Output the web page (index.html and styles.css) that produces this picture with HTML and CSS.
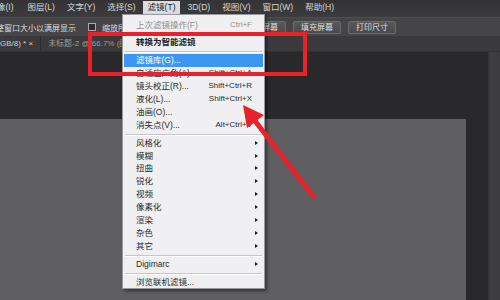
FILE: index.html
```html
<!DOCTYPE html>
<html lang="zh-CN">
<head>
    <meta charset="UTF-8">
    <title>滤镜菜单</title>
    <link rel="stylesheet" href="styles.css">
</head>
<body>
    <div class="screen">
        <div class="menubar">
            <span class="mb-item cut">像(I)</span>
            <span class="mb-item">图层(L)</span>
            <span class="mb-item">文字(Y)</span>
            <span class="mb-item">选择(S)</span>
            <span class="mb-item active">滤镜(T)</span>
            <span class="mb-item">3D(D)</span>
            <span class="mb-item">视图(V)</span>
            <span class="mb-item">窗口(W)</span>
            <span class="mb-item">帮助(H)</span>
        </div>
        <div class="optbar">
            <span class="opt-text">整窗口大小以满屏显示</span>
            <span class="check"></span>
            <span class="opt-text">缩放所有窗口</span>
            <span class="btn first">适合屏幕</span>
            <span class="btn">填充屏幕</span>
            <span class="btn">打印尺寸</span>
        </div>
        <div class="tabbar">
            <span class="tab active">GB/8) * ×</span>
            <span class="tab">未标题-2 @ 66.7% (图层 1, RGB/8)</span>
        </div>
        <div class="work">
            <div class="doc-area">
                <div class="doc"></div>
            </div>
            <div class="panel"></div>
        </div>

        <ul class="menu">
            <li class="item disabled">上次滤镜操作(F)<span class="key">Ctrl+F</span></li>
            <li class="sep"></li>
            <li class="item strong">转换为智能滤镜</li>
            <li class="sep"></li>
            <li class="item hl">滤镜库(G)...</li>
            <li class="item">自适应广角(A)...<span class="key">Shift+Ctrl+A</span></li>
            <li class="item">镜头校正(R)...<span class="key">Shift+Ctrl+R</span></li>
            <li class="item">液化(L)...<span class="key">Shift+Ctrl+X</span></li>
            <li class="item">油画(O)...</li>
            <li class="item">消失点(V)...<span class="key">Alt+Ctrl+V</span></li>
            <li class="sep"></li>
            <li class="item sub">风格化</li>
            <li class="item sub">模糊</li>
            <li class="item sub">扭曲</li>
            <li class="item sub">锐化</li>
            <li class="item sub">视频</li>
            <li class="item sub">像素化</li>
            <li class="item sub">渲染</li>
            <li class="item sub">杂色</li>
            <li class="item sub">其它</li>
            <li class="sep"></li>
            <li class="item sub">Digimarc</li>
            <li class="sep"></li>
            <li class="item">浏览联机滤镜...</li>
        </ul>

        <div class="mark"></div>
        <svg class="arrow" width="500" height="300" viewBox="0 0 500 300">
            <line x1="313" y1="196" x2="252" y2="117" stroke="#e8212b" stroke-width="5" stroke-linecap="round"/>
            <polygon points="243,105 264,115 247,128" fill="#e8212b"/>
        </svg>
    </div>
</body>
</html>
```

FILE: styles.css
```css
* {
    box-sizing: border-box;
}
body {
    margin: 0;
    background: #29282a;
    font-family: 'Liberation Sans', 'Noto Sans CJK SC', sans-serif;
}
.screen {
    position: relative;
    width: 500px;
    height: 300px;
    overflow: hidden;
    display: flex;
    flex-direction: column;
    background: #29282a;
}
.menubar {
    height: 17px;
    padding-top: 1px;
    background: linear-gradient(#333335, #3c3c3e);
    display: flex;
    white-space: nowrap;
}
.mb-item {
    height: 13px;
    line-height: 13px;
    font-size: 8.5px;
    color: #d6d6d6;
    padding: 0 5px;
    margin-right: 2px;
}
.mb-item.cut {
    margin-left: -8px;
    margin-right: 4px;
}
.mb-item.active {
    background: #dcdce0;
    color: #222;
}
.optbar {
    height: 19px;
    background: #454547;
    border-top: 1px solid #4d4d4f;
    display: flex;
    align-items: center;
    white-space: nowrap;
}
.opt-text {
    font-size: 8px;
    color: #dcdcdc;
    margin-left: -4px;
    margin-right: 12px;
}
.check {
    width: 8px;
    height: 8px;
    border: 1px solid #a9a9a9;
    background: #2e2e30;
    margin-right: 6px;
}
.opt-text + .check + .opt-text {
    margin-left: 0;
}
.btn {
    font-size: 8px;
    color: #dedede;
    height: 13px;
    line-height: 11px;
    padding: 0 7px;
    border: 1px solid #6c6c6e;
    border-radius: 2px;
    background: linear-gradient(#58585a, #4a4a4c);
    margin-right: 7px;
}
.btn.first {
    margin-left: 76px;
}
.tabbar {
    height: 16px;
    background: #3a3a3c;
    display: flex;
    align-items: center;
    white-space: nowrap;
    border-bottom: 1px solid #333335;
}
.tab {
    font-size: 8px;
    color: #9a9a9a;
    padding: 0 7px;
    height: 15px;
    line-height: 15px;
}
.tab.active {
    color: #d0d0d0;
    margin-left: -8px;
    padding-left: 8px;
    border-right: 1px solid #2c2c2e;
}
.work {
    flex: 1;
    display: flex;
}
.doc-area {
    flex: 1;
    padding: 67px 22px 0 0;
    background: #29282a;
}
.doc {
    height: 100%;
    background: #5f5e60;
}
.panel {
    width: 12px;
    background: linear-gradient(90deg, #333335, #404042 3px, #3c3c3e);
}
.menu {
    position: absolute;
    left: 122px;
    top: 14px;
    width: 143px;
    height: 275px;
    margin: 0;
    padding: 3.5px 0 0;
    list-style: none;
    background: #f0f0f2;
    border: 1px solid #9a9a9e;
    box-shadow: 2px 2px 3px rgba(0, 0, 0, 0.45);
}
.item {
    position: relative;
    height: 12.9px;
    line-height: 12.9px;
    font-size: 8.5px;
    color: #2a2a2a;
    padding: 0 11px 0 12px;
    margin: 0 1px;
    display: flex;
    justify-content: space-between;
    white-space: nowrap;
}
.item.disabled {
    color: #8e8e8e;
}
.item.strong {
    font-weight: bold;
    color: #222;
}
.item.hl {
    background: #3d97f2;
    color: #fff;
}
.key {
    font-size: 8px;
}
.sub::after {
    content: "";
    position: absolute;
    right: 5px;
    top: 4px;
    border-left: 3px solid #1e1e1e;
    border-top: 2.5px solid transparent;
    border-bottom: 2.5px solid transparent;
}
.sep {
    height: 5px;
    margin: 0 2px;
    display: flex;
    align-items: center;
}
.sep::before {
    content: "";
    flex: 1;
    height: 1px;
    background: #c6c6c8;
    box-shadow: 0 1px 0 #ffffff;
}
.mark {
    position: absolute;
    left: 88px;
    top: 32px;
    width: 219px;
    height: 44px;
    border: 4.5px solid #e8212b;
}
.arrow {
    position: absolute;
    left: 0;
    top: 0;
}
```
